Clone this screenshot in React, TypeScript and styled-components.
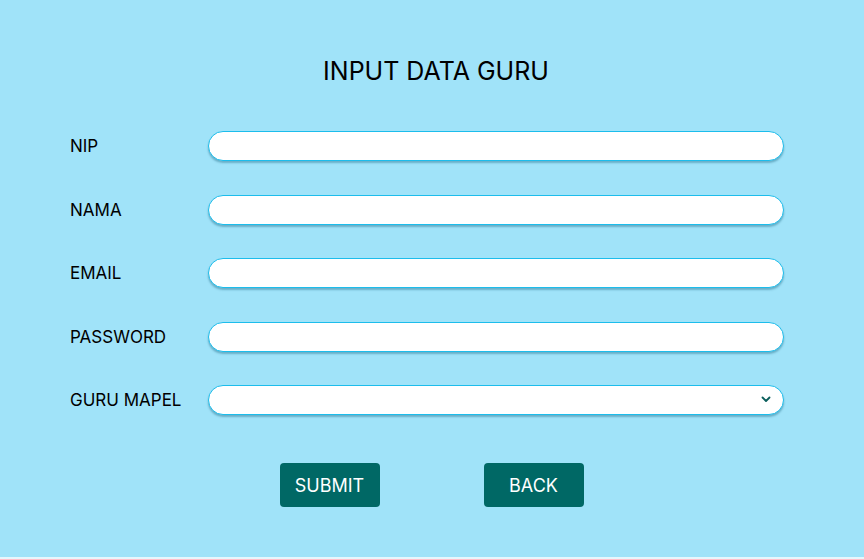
import React from 'react';
import styled, { createGlobalStyle } from 'styled-components';

const GlobalStyle = createGlobalStyle`
  body {
    margin: 0;
    background: #e6f7fd;
    font-family: Inter, "Noto Sans", sans-serif;
  }
`

const Page = styled.div`
  height: 557px;
  background: #a0e3f9;
  display: flex;
  flex-direction: column;
  align-items: center;
  box-sizing: border-box;
  padding-top: 55px;
`

const Title = styled.h1`
  margin: 0 0 0 8px;
  font-size: 25px;
  font-weight: 400;
  color: #000;
  line-height: 32px;
`

const Form = styled.form`
  display: flex;
  flex-direction: column;
  gap: 33.5px;
  width: 714px;
  margin-top: 44px;
  margin-left: -10px;
`

const Row = styled.div`
  display: grid;
  grid-template-columns: 138px 1fr;
  align-items: center;
  height: 30px;
`

const Label = styled.label`
  font-size: 17px;
  color: #000;
`

const Field = styled.input`
  height: 30px;
  box-sizing: border-box;
  border: 1px solid #1cbdec;
  border-radius: 15px;
  background: #fff;
  box-shadow: 0 2px 2px rgba(0, 80, 110, 0.35);
  padding: 0 14px;
  outline: none;
  font-family: inherit;
`

const SelectWrap = styled.div`
  position: relative;
`

const Select = styled.select`
  width: 100%;
  height: 30px;
  box-sizing: border-box;
  border: 1px solid #1cbdec;
  border-radius: 15px;
  background: #fff;
  box-shadow: 0 2px 2px rgba(0, 80, 110, 0.35);
  padding: 0 14px;
  appearance: none;
  outline: none;
`

const Chevron = styled.svg`
  position: absolute;
  right: 13px;
  top: 11px;
  pointer-events: none;
`

const Buttons = styled.div`
  display: flex;
  gap: 104px;
  margin-top: 48px;
  margin-left: -1px;
`

const Button = styled.button`
  width: 100px;
  height: 44px;
  border: none;
  border-radius: 4px;
  background: #006865;
  color: #fff;
  font-family: Inter, "Noto Sans", sans-serif;
  font-size: 18px;
  cursor: pointer;
`

const fields = ['NIP', 'NAMA', 'EMAIL', 'PASSWORD'];

const App = () => {
    return (
        <>
            <GlobalStyle />
            <Page>
                <Title>INPUT DATA GURU</Title>

                <Form onSubmit={(e) => e.preventDefault()}>
                    {fields.map((f) => (
                        <Row key={f}>
                            <Label>{f}</Label>
                            <Field type={f === 'PASSWORD' ? 'password' : 'text'} />
                        </Row>
                    ))}

                    <Row>
                        <Label>GURU MAPEL</Label>
                        <SelectWrap>
                            <Select defaultValue="">
                                <option value=""></option>
                            </Select>
                            <Chevron width="10" height="7" viewBox="0 0 10 7">
                                <path d="M1.5 1.5 L5 5 L8.5 1.5" fill="none" stroke="#0b5e5c" strokeWidth="1.8" strokeLinecap="round" strokeLinejoin="round" />
                            </Chevron>
                        </SelectWrap>
                    </Row>
                </Form>

                <Buttons>
                    <Button type="submit">SUBMIT</Button>
                    <Button type="button">BACK</Button>
                </Buttons>
            </Page>
        </>
    );
}

export default App;
